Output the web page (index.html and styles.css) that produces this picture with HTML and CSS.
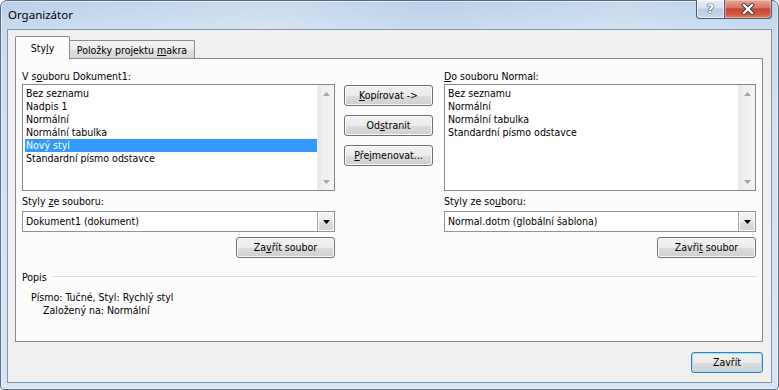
FILE: index.html
```html
<!DOCTYPE html>
<html lang="cs">
<head>
<meta charset="utf-8">
<title>Organizátor</title>
<link rel="stylesheet" href="styles.css">
</head>
<body>
<div class="window">
  <div class="titlebar">
    <div class="title">Organizátor</div>
    <div class="caption-buttons">
      <div class="cap-btn cap-help">?</div>
      <div class="cap-btn cap-close">
        <svg class="close-x" width="14" height="12" viewBox="0 0 14 12">
          <path d="M3 2 L11 10 M11 2 L3 10" stroke="#3a3a3a" stroke-width="4" stroke-linecap="square" fill="none"/>
          <path d="M3 2 L11 10 M11 2 L3 10" stroke="#ffffff" stroke-width="2.2" stroke-linecap="square" fill="none"/>
        </svg>
      </div>
    </div>
  </div>
  <div class="client">
    <div class="tabs">
      <div class="tab tab-active"><span class="tab-text">Sty<u>l</u>y</span></div>
      <div class="tab tab-inactive"><span class="tab-text">Položky projektu <u>m</u>akra</span></div>
    </div>
    <div class="panel">
      <div class="transfer">
        <div class="side side-left">
          <div class="label">V s<u>o</u>uboru Dokument1:</div>
          <div class="listbox">
            <div class="list-items">
              <div class="item">Bez seznamu</div>
              <div class="item">Nadpis 1</div>
              <div class="item">Normální</div>
              <div class="item">Normální tabulka</div>
              <div class="item item-selected">Nový styl</div>
              <div class="item">Standardní písmo odstavce</div>
            </div>
            <div class="vscroll">
              <div class="sb-btn"><svg class="sb-arrow" width="7" height="4" viewBox="0 0 7 4"><path d="M3.5 0 L7 4 L0 4 Z"/></svg></div>
              <div class="sb-btn"><svg class="sb-arrow" width="7" height="4" viewBox="0 0 7 4"><path d="M0 0 L7 0 L3.5 4 Z"/></svg></div>
            </div>
          </div>
          <div class="label label-from">Styly <u>z</u>e souboru:</div>
          <div class="combo">
            <div class="combo-text">Dokument1 (dokument)</div>
            <div class="combo-drop"><svg width="7" height="4" viewBox="0 0 7 4"><path d="M0 0 L7 0 L3.5 4 Z" fill="#000"/></svg></div>
          </div>
          <div class="btn btn-file">Za<u>v</u>řít soubor</div>
        </div>
        <div class="actions">
          <div class="btn btn-action"><u>K</u>opírovat -&gt;</div>
          <div class="btn btn-action">Od<u>s</u>tranit</div>
          <div class="btn btn-action"><u>P</u>řejmenovat...</div>
        </div>
        <div class="side side-right">
          <div class="label"><u>D</u>o souboru Normal:</div>
          <div class="listbox">
            <div class="list-items">
              <div class="item">Bez seznamu</div>
              <div class="item">Normální</div>
              <div class="item">Normální tabulka</div>
              <div class="item">Standardní písmo odstavce</div>
            </div>
            <div class="vscroll">
              <div class="sb-btn"><svg class="sb-arrow" width="7" height="4" viewBox="0 0 7 4"><path d="M3.5 0 L7 4 L0 4 Z"/></svg></div>
              <div class="sb-btn"><svg class="sb-arrow" width="7" height="4" viewBox="0 0 7 4"><path d="M0 0 L7 0 L3.5 4 Z"/></svg></div>
            </div>
          </div>
          <div class="label label-from">Styly ze so<u>u</u>boru:</div>
          <div class="combo">
            <div class="combo-text">Normal.dotm (globální šablona)</div>
            <div class="combo-drop"><svg width="7" height="4" viewBox="0 0 7 4"><path d="M0 0 L7 0 L3.5 4 Z" fill="#000"/></svg></div>
          </div>
          <div class="btn btn-file">Zavři<u>t</u> soubor</div>
        </div>
      </div>
      <div class="group-head">
        <span class="group-title">Popis</span>
        <div class="group-rule"></div>
      </div>
      <div class="desc">
        <div class="desc-line desc-line1">Písmo: Tučné, Styl: Rychlý styl</div>
        <div class="desc-line desc-line2">Založený na: Normální</div>
      </div>
    </div>
    <div class="footer">
      <div class="btn btn-default">Zavřít</div>
    </div>
  </div>
</div>
</body>
</html>
```

FILE: styles.css
```css
* {
  box-sizing: border-box;
}

html,
body {
  margin: 0;
  padding: 0;
}

body {
  width: 779px;
  height: 390px;
  overflow: hidden;
  background: #ffffff;
  font-family: "DejaVu Sans Condensed", "DejaVu Sans", sans-serif;
  font-stretch: condensed;
  font-size: 10.5px;
  color: #000000;
}

u {
  text-decoration: underline;
  text-underline-offset: 1px;
}

.window {
  width: 779px;
  height: 390px;
  display: flex;
  flex-direction: column;
  border: 1px solid #5b6a7c;
  border-radius: 7px 7px 4px 4px;
  background: linear-gradient(180deg, #b9cfe9 0px, #c9dbef 28px, #d3e2f3 160px, #d6e5f4 100%);
  box-shadow: inset 0 0 0 1px rgba(255, 255, 255, 0.55);
}

/* Title bar */
.titlebar {
  height: 28px;
  display: flex;
  align-items: flex-start;
  padding-left: 7px;
  background: linear-gradient(100deg, rgba(255,255,255,0) 0%, rgba(255,255,255,0.25) 35%, rgba(255,255,255,0) 55%, rgba(255,255,255,0.2) 80%, rgba(255,255,255,0) 100%);
  border-radius: 6px 6px 0 0;
}

.title {
  font-family: "Noto Sans", "Open Sans", sans-serif;
  font-stretch: normal;
  font-size: 11.5px;
  line-height: 16px;
  margin-top: 6px;
  color: #000000;
}

.caption-buttons {
  margin-left: auto;
  margin-right: 6px;
  margin-top: -1px;
  display: flex;
}

.cap-btn {
  height: 19px;
  border: 1px solid #4b5c72;
  border-top: none;
  display: flex;
  align-items: center;
  justify-content: center;
}

.cap-help {
  width: 28px;
  border-right: none;
  border-radius: 0 0 0 4px;
  background: linear-gradient(180deg, #e8eff7 0%, #d5e1ee 45%, #bccde1 50%, #c9d8e9 100%);
  box-shadow: inset 0 0 0 1px rgba(255, 255, 255, 0.6);
  font-family: "DejaVu Sans", sans-serif;
  font-stretch: normal;
  font-weight: bold;
  font-size: 13px;
  color: #ffffff;
  text-shadow: 0 0 1px #2e3a48, 0 0 1px #2e3a48, 0 0 1px #2e3a48;
  line-height: 18px;
}

.cap-close {
  width: 48px;
  border-radius: 0 0 4px 0;
  background: linear-gradient(180deg, #e8a898 0%, #d87466 42%, #c54432 50%, #cf5a44 80%, #e0806a 100%);
  box-shadow: inset 0 0 0 1px rgba(255, 210, 200, 0.5);
}

.close-x {
  display: block;
}

/* Client area */
.client {
  flex: 1;
  margin: 0 6px 6px 6px;
  border: 1px solid #8597ad;
  background: #f0f0f0;
  padding: 6px 8px 9px 7px;
  display: flex;
  flex-direction: column;
}

/* Tabs */
.tabs {
  height: 22px;
  display: flex;
  align-items: flex-end;
  position: relative;
  z-index: 1;
}

.tab {
  border: 1px solid #898c95;
  border-bottom: none;
  line-height: 15px;
  text-align: center;
  white-space: nowrap;
}

.tab-text {
  white-space: nowrap;
}

.tab-active {
  width: 55px;
  height: 23px;
  margin-bottom: -1px;
  padding-top: 4px;
  background: #fcfcfc;
  border-radius: 2px 2px 0 0;
  position: relative;
  z-index: 2;
}

.tab-inactive {
  width: 126px;
  height: 18px;
  margin-left: -1px;
  padding-top: 2px;
  background: linear-gradient(180deg, #f3f3f3 0%, #ebebeb 50%, #dedede 51%, #d8d8d8 100%);
  border-radius: 2px 2px 0 0;
}

/* Panel */
.panel {
  flex: 1;
  border: 1px solid #898c95;
  background: #fcfcfc;
  padding: 10px 6px 0 6px;
  display: flex;
  flex-direction: column;
}

.transfer {
  display: flex;
}

.side {
  display: flex;
  flex-direction: column;
}

.side-left {
  width: 313px;
}

.side-right {
  flex: 1;
}

.label {
  line-height: 15px;
  height: 15px;
  white-space: nowrap;
}

.label-from {
  margin-top: 3px;
  margin-bottom: 2px;
}

.listbox {
  height: 107px;
  border: 1px solid #828790;
  background: #ffffff;
  display: flex;
}

.list-items {
  flex: 1;
  padding: 2px 0 0 2px;
}

.item {
  height: 13px;
  line-height: 13px;
  padding-left: 1px;
  white-space: nowrap;
}

.item-selected {
  background: #3399ff;
  color: #ffffff;
}

.vscroll {
  width: 17px;
  display: flex;
  flex-direction: column;
  justify-content: space-between;
  background: linear-gradient(90deg, #e6e6e6 0%, #efefef 30%, #f3f3f3 100%);
  border-left: 1px solid #ececec;
}

.sb-btn {
  height: 17px;
  display: flex;
  align-items: center;
  justify-content: center;
}

.sb-arrow {
  display: block;
  fill: #a6a6a6;
}

.combo {
  height: 21px;
  border: 1px solid #8e939b;
  background: #ffffff;
  display: flex;
}

.combo-text {
  flex: 1;
  padding-left: 3px;
  line-height: 19px;
  white-space: nowrap;
}

.combo-drop {
  width: 17px;
  border-left: 1px solid #9da2aa;
  background: linear-gradient(180deg, #f4f4f4 0%, #ebebeb 50%, #dcdcdc 51%, #d2d2d2 100%);
  box-shadow: inset 0 0 0 1px #fbfbfb;
  display: flex;
  align-items: center;
  justify-content: center;
}

.combo-drop svg {
  display: block;
}

/* Buttons */
.btn {
  height: 21px;
  border: 1px solid #707070;
  border-radius: 3px;
  background: linear-gradient(180deg, #f2f2f2 0%, #ebebeb 50%, #dddddd 51%, #cfcfcf 100%);
  box-shadow: inset 0 0 0 1px #fbfbfb;
  line-height: 19px;
  text-align: center;
  white-space: nowrap;
}

.btn-file {
  width: 99px;
  align-self: flex-end;
  margin-top: 5px;
}

.actions {
  width: 89px;
  margin: 16px 11px 0 9px;
  display: flex;
  flex-direction: column;
  gap: 9px;
}

.btn-action {
  width: 89px;
}

.btn-default {
  width: 72px;
  border-color: #3c7fb1;
  box-shadow: inset 0 0 0 1px #9edcf7, inset 0 0 2px 1px #c6ecfb;
}

/* Description group */
.group-head {
  margin-top: 12px;
  height: 15px;
  line-height: 15px;
  display: flex;
  align-items: center;
}

.group-title {
  white-space: nowrap;
}

.group-rule {
  flex: 1;
  height: 1px;
  margin-left: 6px;
  margin-right: -1px;
  margin-bottom: 2px;
  background: #d5dfe5;
}

.desc {
  margin-top: 6px;
}

.desc-line {
  line-height: 13px;
  white-space: nowrap;
}

.desc-line1 {
  padding-left: 9px;
}

.desc-line2 {
  padding-left: 21px;
}

/* Footer */
.footer {
  margin-top: 10px;
  display: flex;
  justify-content: flex-end;
}
```
